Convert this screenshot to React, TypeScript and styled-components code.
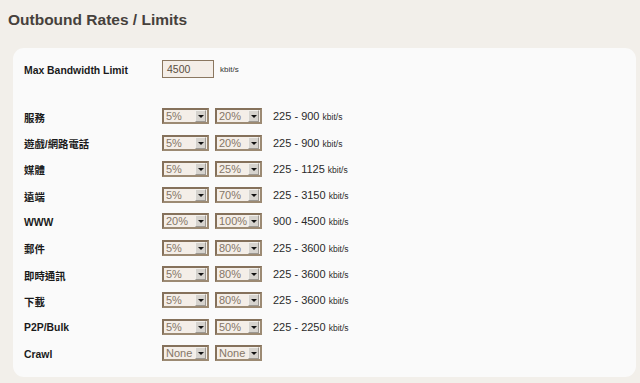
import React from "react";
import styled, { createGlobalStyle } from "styled-components";

const Global = createGlobalStyle`
  html, body { margin: 0; padding: 0; background: #f2efea; }
  body { font-family: "Liberation Sans", Tahoma, "Noto Sans CJK TC", sans-serif; }
`;

const Page = styled.div`
  width: 640px;
  height: 383px;
  box-sizing: border-box;
  padding: 11px 4px 0 13px;
`;

const Title = styled.h1`
  margin: 0 0 0 -5px;
  font-size: 15.5px;
  line-height: 18px;
  font-weight: bold;
  color: #46413c;
  height: 37px;
`;

const Panel = styled.div`
  width: 623px;
  height: 329px;
  box-sizing: border-box;
  background: #fafafa;
  border-radius: 11px;
  padding: 8px 0 0 11px;
`;

const Row = styled.div<{ $gapAfter?: number }>`
  display: flex;
  align-items: center;
  height: 26.33px;
  margin-bottom: ${(p) => p.$gapAfter ?? 0}px;
`;

const Label = styled.div`
  width: 138px;
  font-size: 10.4px;
  font-weight: bold;
  color: #1a1a1a;
  font-family: "Liberation Sans", "Noto Sans CJK TC", sans-serif;
  padding-top: 2px;
`;

const Input = styled.div`
  width: 52px;
  height: 18px;
  box-sizing: border-box;
  border: 1px solid #8b7760;
  background: #f4eee8;
  font-size: 10.5px;
  color: #5a4d40;
  padding: 1px 0 0 4px;
  line-height: 14px;
`;

const Unit = styled.span`
  font-size: 8px;
  color: #333;
  margin-left: 6px;
`;

const SelectBox = styled.div`
  display: flex;
  align-items: center;
  width: 47px;
  height: 16px;
  box-sizing: border-box;
  border: 2px solid #85715b;
  border-right-color: #9c8a73;
  border-bottom-color: #9c8a73;
  background: #f4eee8;
  margin-right: 6px;
`;

const SelectValue = styled.span`
  flex: 1;
  font-size: 11px;
  color: #857667;
  padding-left: 2px;
  line-height: 12px;
  white-space: nowrap;
  overflow: hidden;
`;

const Arrow = styled.span`
  flex: none;
  width: 11px;
  height: 12px;
  box-sizing: border-box;
  margin-right: 1px;
  background: #d6d3ce;
  border: 1px solid #9d9993;
  border-top-color: #f2f0ec;
  border-left-color: #f2f0ec;
  display: flex;
  align-items: center;
  justify-content: center;
  &::after {
    content: "";
    border-left: 3px solid transparent;
    border-right: 3px solid transparent;
    border-top: 3px solid #111;
    margin-top: 1px;
  }
`;

const Range = styled.span`
  font-size: 11px;
  color: #2a2a2a;
  margin-left: 5px;
`;

const Small = styled.span`
  font-size: 8.5px;
`;

const Select = ({ value }: { value: string }) => (
  <SelectBox>
    <SelectValue>{value}</SelectValue>
    <Arrow />
  </SelectBox>
);

const rows: [string, string, string, string | null][] = [
  ["服務", "5%", "20%", "225 - 900"],
  ["遊戲/網路電話", "5%", "20%", "225 - 900"],
  ["媒體", "5%", "25%", "225 - 1125"],
  ["遠端", "5%", "70%", "225 - 3150"],
  ["WWW", "20%", "100%", "900 - 4500"],
  ["郵件", "5%", "80%", "225 - 3600"],
  ["即時通訊", "5%", "80%", "225 - 3600"],
  ["下載", "5%", "80%", "225 - 3600"],
  ["P2P/Bulk", "5%", "50%", "225 - 2250"],
  ["Crawl", "None", "None", null],
];

export default function App() {
  return (
    <>
      <Global />
      <Page>
        <Title>Outbound Rates / Limits</Title>
        <Panel>
          <Row $gapAfter={20.7}>
            <Label>Max Bandwidth Limit</Label>
            <Input>4500</Input>
            <Unit>kbit/s</Unit>
          </Row>
          {rows.map(([name, min, max, range]) => (
            <Row key={name}>
              <Label>{name}</Label>
              <Select value={min} />
              <Select value={max} />
              {range && (
                <Range>
                  {range} <Small>kbit/s</Small>
                </Range>
              )}
            </Row>
          ))}
        </Panel>
      </Page>
    </>
  );
}
